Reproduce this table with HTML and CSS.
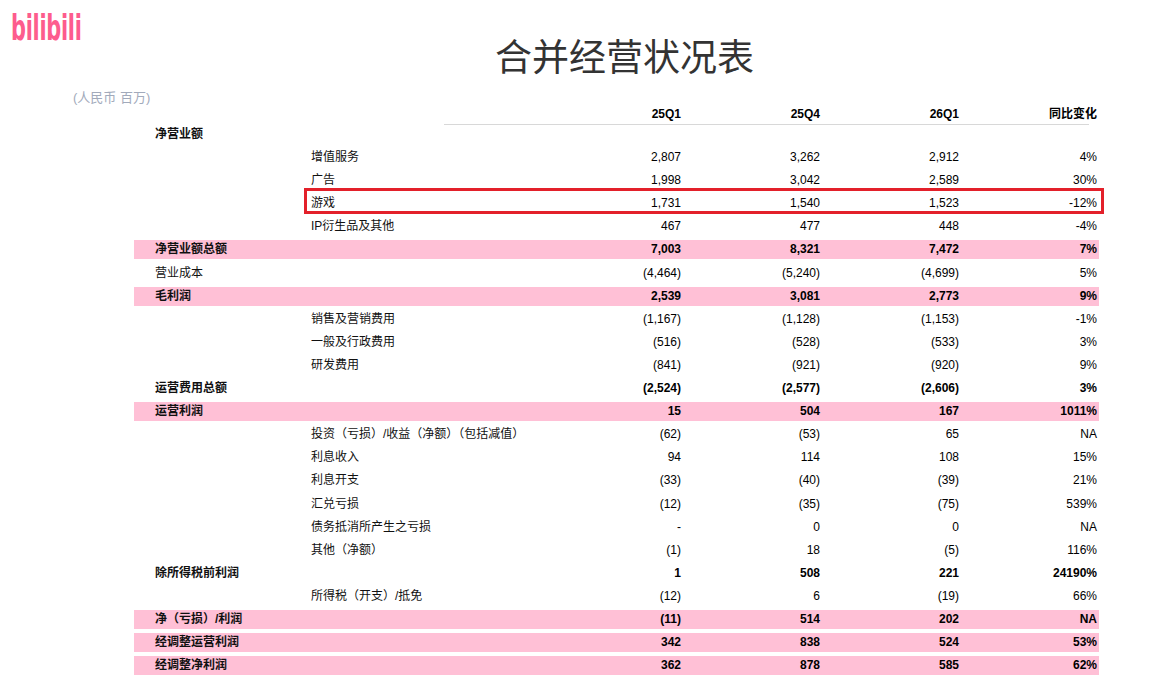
FILE: index.html
```html
<!DOCTYPE html>
<html lang="zh-CN">
<head>
<meta charset="utf-8">
<title>合并经营状况表</title>
<link rel="stylesheet" href="styles.css">
</head>
<body>
<div class="page">
  <header class="top">
    <div class="logo"><span class="logo-text">bilibili</span></div>
    <h1 class="title">合并经营状况表</h1>
  </header>
  <div class="unit">(人民币 百万)</div>

  <section class="table">
    <div class="row head">
      <div class="c1"></div><div class="c2"></div>
      <div class="num">25Q1</div><div class="num">25Q4</div><div class="num">26Q1</div><div class="num">同比变化</div>
    </div>
    <div class="head-line"></div>

    <div class="rows">
      <div class="row"><div class="c1 b">净营业额</div><div class="c2"></div><div class="num"></div><div class="num"></div><div class="num"></div><div class="num"></div></div>
      <div class="row"><div class="c1"></div><div class="c2">增值服务</div><div class="num">2,807</div><div class="num">3,262</div><div class="num">2,912</div><div class="num">4%</div></div>
      <div class="row"><div class="c1"></div><div class="c2">广告</div><div class="num">1,998</div><div class="num">3,042</div><div class="num">2,589</div><div class="num">30%</div></div>
      <div class="row mark"><div class="c1"></div><div class="c2">游戏</div><div class="num">1,731</div><div class="num">1,540</div><div class="num">1,523</div><div class="num">-12%</div></div>
      <div class="row"><div class="c1"></div><div class="c2">IP衍生品及其他</div><div class="num">467</div><div class="num">477</div><div class="num">448</div><div class="num">-4%</div></div>
      <div class="row pink bold"><div class="c1">净营业额总额</div><div class="c2"></div><div class="num">7,003</div><div class="num">8,321</div><div class="num">7,472</div><div class="num">7%</div></div>
      <div class="row"><div class="c1">营业成本</div><div class="c2"></div><div class="num">(4,464)</div><div class="num">(5,240)</div><div class="num">(4,699)</div><div class="num">5%</div></div>
      <div class="row pink bold"><div class="c1">毛利润</div><div class="c2"></div><div class="num">2,539</div><div class="num">3,081</div><div class="num">2,773</div><div class="num">9%</div></div>
      <div class="row"><div class="c1"></div><div class="c2">销售及营销费用</div><div class="num">(1,167)</div><div class="num">(1,128)</div><div class="num">(1,153)</div><div class="num">-1%</div></div>
      <div class="row"><div class="c1"></div><div class="c2">一般及行政费用</div><div class="num">(516)</div><div class="num">(528)</div><div class="num">(533)</div><div class="num">3%</div></div>
      <div class="row"><div class="c1"></div><div class="c2">研发费用</div><div class="num">(841)</div><div class="num">(921)</div><div class="num">(920)</div><div class="num">9%</div></div>
      <div class="row bold"><div class="c1">运营费用总额</div><div class="c2"></div><div class="num">(2,524)</div><div class="num">(2,577)</div><div class="num">(2,606)</div><div class="num">3%</div></div>
      <div class="row pink bold"><div class="c1">运营利润</div><div class="c2"></div><div class="num">15</div><div class="num">504</div><div class="num">167</div><div class="num">1011%</div></div>
      <div class="row"><div class="c1"></div><div class="c2">投资（亏损）/收益（净额）（包括减值）</div><div class="num">(62)</div><div class="num">(53)</div><div class="num">65</div><div class="num">NA</div></div>
      <div class="row"><div class="c1"></div><div class="c2">利息收入</div><div class="num">94</div><div class="num">114</div><div class="num">108</div><div class="num">15%</div></div>
      <div class="row"><div class="c1"></div><div class="c2">利息开支</div><div class="num">(33)</div><div class="num">(40)</div><div class="num">(39)</div><div class="num">21%</div></div>
      <div class="row"><div class="c1"></div><div class="c2">汇兑亏损</div><div class="num">(12)</div><div class="num">(35)</div><div class="num">(75)</div><div class="num">539%</div></div>
      <div class="row"><div class="c1"></div><div class="c2">债务抵消所产生之亏损</div><div class="num">-</div><div class="num">0</div><div class="num">0</div><div class="num">NA</div></div>
      <div class="row"><div class="c1"></div><div class="c2">其他（净额）</div><div class="num">(1)</div><div class="num">18</div><div class="num">(5)</div><div class="num">116%</div></div>
      <div class="row bold"><div class="c1">除所得税前利润</div><div class="c2"></div><div class="num">1</div><div class="num">508</div><div class="num">221</div><div class="num">24190%</div></div>
      <div class="row"><div class="c1"></div><div class="c2">所得税（开支）/抵免</div><div class="num">(12)</div><div class="num">6</div><div class="num">(19)</div><div class="num">66%</div></div>
      <div class="row pink bold"><div class="c1">净（亏损）/利润</div><div class="c2"></div><div class="num">(11)</div><div class="num">514</div><div class="num">202</div><div class="num">NA</div></div>
      <div class="row pink bold"><div class="c1">经调整运营利润</div><div class="c2"></div><div class="num">342</div><div class="num">838</div><div class="num">524</div><div class="num">53%</div></div>
      <div class="row pink bold"><div class="c1">经调整净利润</div><div class="c2"></div><div class="num">362</div><div class="num">878</div><div class="num">585</div><div class="num">62%</div></div>
    </div>
  </section>
</div>
</body>
</html>
```

FILE: styles.css
```css
* { box-sizing: border-box; }

html, body {
  margin: 0;
  padding: 0;
  background: #ffffff;
}

body {
  font-family: "Liberation Sans", "Noto Sans CJK SC", sans-serif;
  font-size: 12px;
  color: #111111;
}

.page {
  width: 1167px;
}

.top {
  display: flex;
  align-items: flex-start;
  height: 84px;
}

.logo {
  width: 72px;
  margin: 10px 0 0 11px;
  height: 36px;
  overflow: visible;
}

.logo-text {
  display: inline-block;
  font-family: "DejaVu Sans", sans-serif;
  font-weight: 700;
  font-size: 36px;
  line-height: 36px;
  color: #fd5c8d;
  transform: scaleX(0.58);
  transform-origin: left center;
  letter-spacing: -0.5px;
}

.title {
  margin: 29px 0 0 412px;
  font-family: "Noto Sans CJK SC", sans-serif;
  font-weight: 400;
  font-size: 37px;
  line-height: 52px;
  color: #333333;
  white-space: nowrap;
}

.unit {
  margin-top: 6px;
  padding-left: 73px;
  font-size: 13px;
  line-height: 15px;
  height: 15px;
  color: #a2aabb;
}

.table {
  margin-left: 134px;
  width: 965px;
}

.row {
  display: grid;
  grid-template-columns: 177px 231px 139px 139px 139px 138px;
  height: 19px;
  line-height: 19px;
  white-space: nowrap;
}

.head {
  font-weight: 700;
  color: #000000;
}

.head-line {
  margin-left: 310px;
  width: 645px;
  height: 1px;
  background: #d8d8d8;
}

.rows {
  display: flex;
  flex-direction: column;
  gap: 4.1px;
}

.c1 {
  padding-left: 21px;
}

.b,
.bold {
  font-weight: 700;
}

.num {
  text-align: right;
  color: #000000;
}

.pink {
  background: #ffc0d6;
}

.mark {
  position: relative;
}

.mark::after {
  content: "";
  position: absolute;
  left: 170px;
  right: -5px;
  top: -6px;
  bottom: -1px;
  border: 3px solid #e3202a;
  pointer-events: none;
}
```
